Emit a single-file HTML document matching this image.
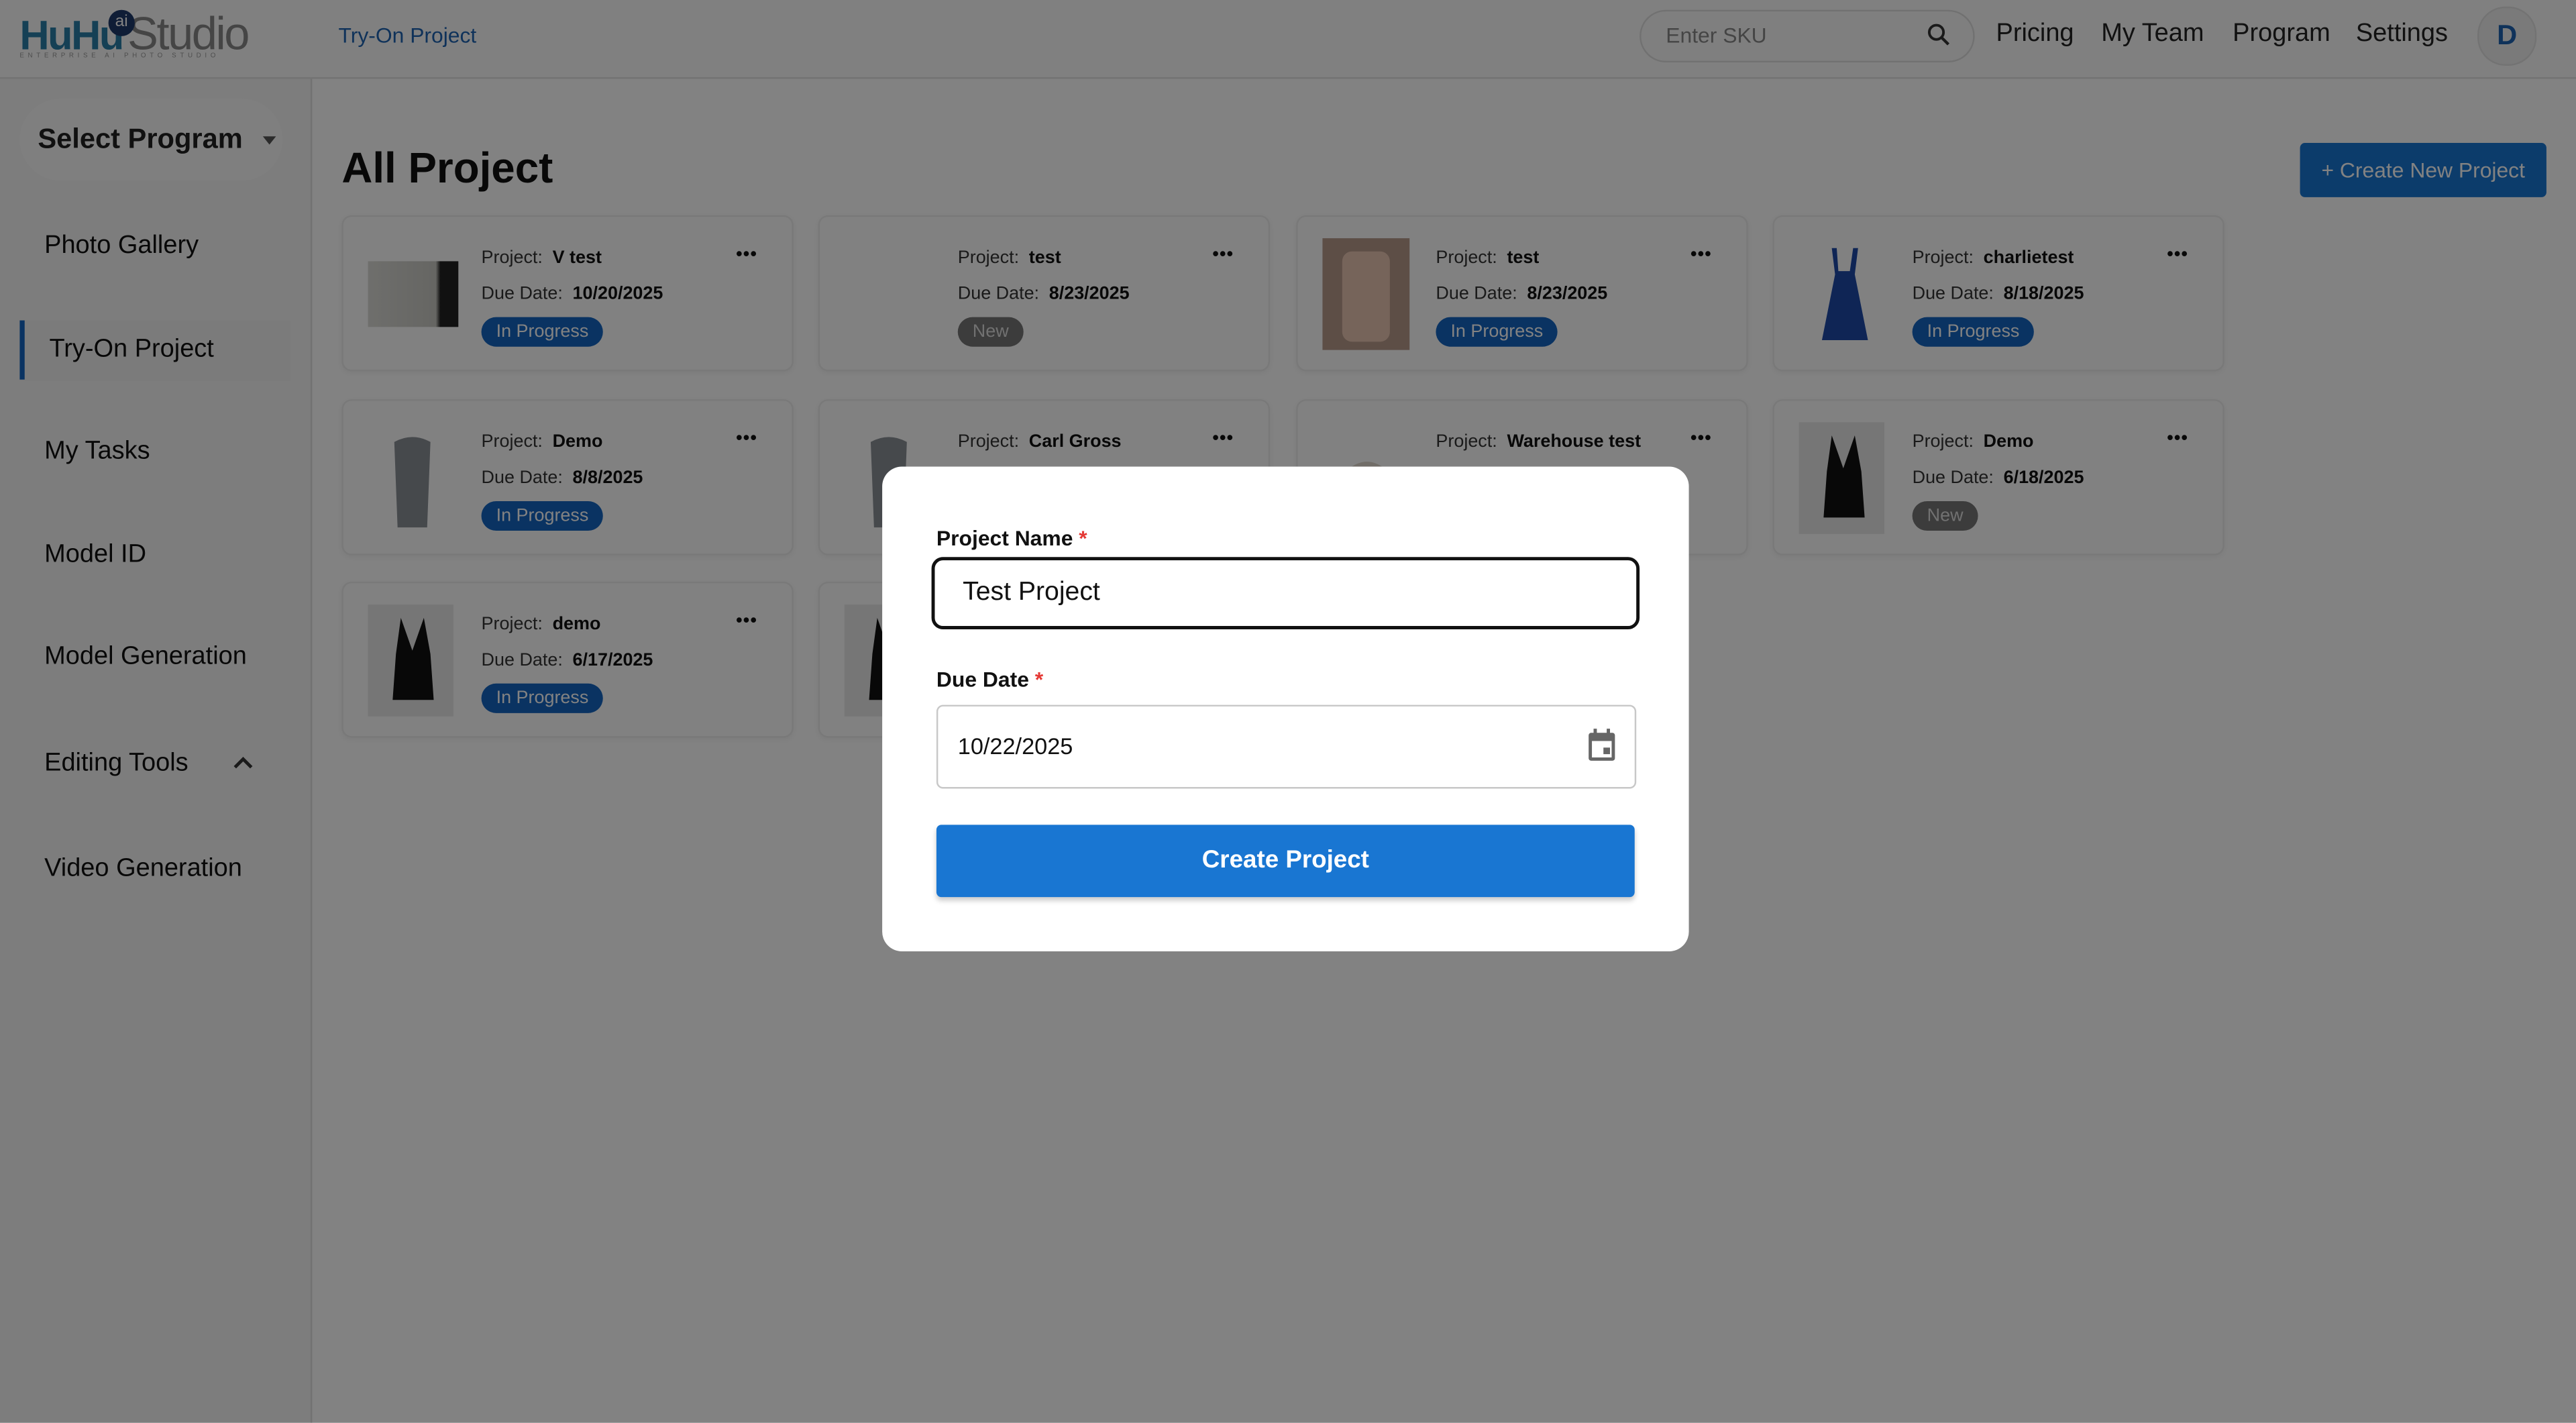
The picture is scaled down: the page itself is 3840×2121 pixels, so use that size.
<!DOCTYPE html>
<html><head><meta charset="utf-8">
<style>
html,body{margin:0;padding:0;width:3840px;height:2121px;overflow:hidden;background:#fff;}
#s{position:absolute;left:0;top:0;width:1568px;height:866px;transform:scale(2.44898);transform-origin:0 0;font-family:"Liberation Sans",sans-serif;color:#222;background:#fff;overflow:hidden;}
.abs{position:absolute;}
.hdr{left:0;top:0;width:1568px;height:47px;background:#fbfbfb;border-bottom:1px solid #e2e2e2;}
.side{left:0;top:48px;width:189px;height:818px;background:#f6f6f6;border-right:1px solid #e0e0e0;}
.mi{position:absolute;left:27px;font-size:15.5px;color:#111;}
.card{position:absolute;width:273px;height:93px;border:1px solid #eee;border-radius:6px;background:#fdfdfd;box-shadow:0 1px 3px rgba(0,0,0,.05);}
.card .th{position:absolute;left:15px;top:13px;width:55px;height:68px;}
.card .l1{position:absolute;left:84px;top:19px;font-size:11px;color:#333;}
.card .l2{position:absolute;left:84px;top:41px;font-size:11px;color:#333;}
.card b{font-weight:700;color:#111;margin-left:6px;}
.card .bd{position:absolute;left:84px;top:61px;height:18px;line-height:18px;border-radius:9px;font-size:11px;color:#fff;padding:0 9px;background:#1565c0;}
.card .bd.n{background:#777;color:#ddd;}
.card .dots{position:absolute;left:239px;top:17px;font-size:11px;font-weight:700;letter-spacing:0.5px;color:#111;}
.ov{left:0;top:0;width:1568px;height:866px;background:rgba(0,0,0,.49);}
.nv{position:absolute;top:12px;font-size:15.5px;color:#222;}
</style></head><body><div id="s">
<div class="abs hdr"></div>
<div class="abs" style="left:12px;top:5px;letter-spacing:-1px;"><span style="color:#2a7fa8;font-weight:700;font-size:25px;">HuHu</span><span style="color:#888;font-weight:300;font-size:28px;margin-left:3px;">Studio</span></div>
<div class="abs" style="left:66px;top:6px;width:16px;height:16px;border-radius:8px;background:#1f3a6a;color:#fff;font-size:10px;text-align:center;line-height:15px;">ai</div>
<div class="abs" style="left:12px;top:31px;font-size:4px;letter-spacing:2.3px;color:#999;">ENTERPRISE AI PHOTO STUDIO</div>
<div class="abs" style="left:206px;top:14px;font-size:13px;color:#1e63b0;">Try-On Project</div>
<div class="abs" style="left:998px;top:6px;width:202px;height:30px;border:1px solid #ddd;border-radius:16px;background:#fafafa;"></div>
<div class="abs" style="left:1014px;top:14px;font-size:13px;color:#888;">Enter SKU</div>
<svg class="abs" style="left:1172px;top:13px" width="16" height="16" viewBox="0 0 24 24"><circle cx="10" cy="10" r="6.5" fill="none" stroke="#333" stroke-width="2.4"/><path d="M15 15l6 6" stroke="#333" stroke-width="2.6"/></svg>
<div class="nv" style="left:1215px;">Pricing</div>
<div class="nv" style="left:1279px;">My Team</div>
<div class="nv" style="left:1359px;">Program</div>
<div class="nv" style="left:1434px;">Settings</div>
<div class="abs" style="left:1508px;top:4px;width:34px;height:34px;border-radius:17px;background:#f0f0f0;border:1px solid #e2e2e2;color:#1e63b0;font-size:17px;font-weight:700;text-align:center;line-height:34px;">D</div>

<div class="abs side"></div>
<div class="abs" style="left:12px;top:60px;width:160px;height:50px;border-radius:25px;background:#f9f9f9;"></div>
<div class="abs" style="left:23px;top:75px;font-size:17px;font-weight:700;color:#222;">Select Program</div>
<div class="abs" style="left:160px;top:83px;width:0;height:0;border-left:4px solid transparent;border-right:4px solid transparent;border-top:5px solid #555;"></div>
<div class="mi" style="top:141px;">Photo Gallery</div>
<div class="abs" style="left:12px;top:195px;width:165px;height:37px;background:#f2f2f2;"></div>
<div class="abs" style="left:12px;top:195px;width:3px;height:36px;background:#1565c0;"></div>
<div class="mi" style="left:30px;top:204px;">Try-On Project</div>
<div class="mi" style="top:266px;">My Tasks</div>
<div class="mi" style="top:329px;">Model ID</div>
<div class="mi" style="top:391px;">Model Generation</div>
<div class="mi" style="top:456px;">Editing Tools</div>
<svg class="abs" style="left:141px;top:459px" width="14" height="10" viewBox="0 0 14 10"><path d="M2 8l5-5 5 5" fill="none" stroke="#333" stroke-width="2"/></svg>
<div class="mi" style="top:520px;">Video Generation</div>

<div class="abs" style="left:208px;top:87px;font-size:26px;font-weight:700;color:#111;">All Project</div>
<div class="abs" style="left:1400px;top:87px;width:150px;height:33px;background:#1976d2;border-radius:3px;color:#fff;font-size:13px;line-height:33px;text-align:center;">+ Create New Project</div>

<div class="card" style="left:208px;top:131px;"><div class="th" style="top:27px;height:40px;background:linear-gradient(90deg,#d9d9d5 0,#c8c8c2 75%,#222 80%);"></div><div class="l1">Project:<b>V test</b></div><div class="l2">Due Date:<b>10/20/2025</b></div><div class="bd">In Progress</div><div class="dots">•••</div></div>
<div class="card" style="left:498px;top:131px;"><div class="l1">Project:<b>test</b></div><div class="l2">Due Date:<b>8/23/2025</b></div><div class="bd n">New</div><div class="dots">•••</div></div>
<div class="card" style="left:789px;top:131px;"><div class="th" style="width:53px;background:#b6998a;"><div style="margin:8px 12px;width:29px;height:55px;background:#e8c4b0;border-radius:6px;"></div></div><div class="l1">Project:<b>test</b></div><div class="l2">Due Date:<b>8/23/2025</b></div><div class="bd">In Progress</div><div class="dots">•••</div></div>
<div class="card" style="left:1079px;top:131px;"><svg class="th" viewBox="0 0 55 68"><path d="M20 6 L22 22 L14 62 L42 62 L34 22 L36 6 L33 6 L31 20 L24 20 L23 6Z" fill="#1f4aa8"/></svg><div class="l1">Project:<b>charlietest</b></div><div class="l2">Due Date:<b>8/18/2025</b></div><div class="bd">In Progress</div><div class="dots">•••</div></div>
<div class="card" style="left:208px;top:243px;"><svg class="th" viewBox="0 0 55 68"><path d="M16 12 Q27 6 38 12 L36 64 L18 64Z" fill="#8a8f96"/></svg><div class="l1">Project:<b>Demo</b></div><div class="l2">Due Date:<b>8/8/2025</b></div><div class="bd">In Progress</div><div class="dots">•••</div></div>
<div class="card" style="left:498px;top:243px;"><svg class="th" viewBox="0 0 55 68"><path d="M16 12 Q27 6 38 12 L36 64 L18 64Z" fill="#8a8f96"/></svg><div class="l1">Project:<b>Carl Gross</b></div><div class="l2">Due Date:<b>8/8/2025</b></div><div class="bd">In Progress</div><div class="dots">•••</div></div>
<div class="card" style="left:789px;top:243px;"><svg class="th" viewBox="0 0 55 68"><path d="M14 30 Q27 18 40 30 L42 64 L12 64Z" fill="#ddd6cc"/></svg><div class="l1">Project:<b>Warehouse test</b></div><div class="l2">Due Date:<b>7/1/2025</b></div><div class="bd">In Progress</div><div class="dots">•••</div></div>
<div class="card" style="left:1079px;top:243px;"><div class="th" style="width:52px;background:#e8e8e8;"></div><svg class="th" viewBox="0 0 55 68"><path d="M20 8 L27 28 L34 8 L38 30 L40 58 L15 58 L17 30Z" fill="#111"/></svg><div class="l1">Project:<b>Demo</b></div><div class="l2">Due Date:<b>6/18/2025</b></div><div class="bd n">New</div><div class="dots">•••</div></div>
<div class="card" style="left:208px;top:354px;"><div class="th" style="width:52px;background:#e8e8e8;"></div><svg class="th" viewBox="0 0 55 68"><path d="M20 8 L27 28 L34 8 L38 30 L40 58 L15 58 L17 30Z" fill="#111"/></svg><div class="l1">Project:<b>demo</b></div><div class="l2">Due Date:<b>6/17/2025</b></div><div class="bd">In Progress</div><div class="dots">•••</div></div>
<div class="card" style="left:498px;top:354px;"><div class="th" style="width:52px;background:#e8e8e8;"></div><svg class="th" viewBox="0 0 55 68"><path d="M20 8 L27 28 L34 8 L38 30 L40 58 L15 58 L17 30Z" fill="#111"/></svg><div class="l1">Project:<b>demo</b></div><div class="l2">Due Date:<b>6/17/2025</b></div><div class="bd">In Progress</div><div class="dots">•••</div></div>

<div class="abs ov"></div>

<div class="abs" style="left:537px;top:284px;width:491px;height:295px;background:#fff;border-radius:12px;"></div>
<div class="abs" style="left:570px;top:320px;font-size:13px;font-weight:700;color:#111;">Project Name <span style="color:#e53935;">*</span></div>
<div class="abs" style="left:567px;top:339px;width:427px;height:40px;border:2.5px solid #111;border-radius:7px;background:#fff;"></div>
<div class="abs" style="left:586px;top:352px;font-size:16px;color:#111;">Test Project</div>
<div class="abs" style="left:570px;top:406px;font-size:13px;font-weight:700;color:#111;">Due Date <span style="color:#e53935;">*</span></div>
<div class="abs" style="left:570px;top:429px;width:424px;height:49px;border:1px solid #c8c8c8;border-radius:4px;background:#fff;"></div>
<div class="abs" style="left:583px;top:446px;font-size:14px;color:#111;">10/22/2025</div>
<svg class="abs" style="left:965px;top:443px" width="20" height="22" viewBox="0 0 20 22"><rect x="2" y="3" width="16" height="17" rx="1.5" fill="#666"/><rect x="4" y="8" width="12" height="10" fill="#fff"/><rect x="5" y="0.5" width="2" height="4" fill="#666"/><rect x="13" y="0.5" width="2" height="4" fill="#666"/><rect x="11" y="12" width="4" height="4" fill="#666"/></svg>
<div class="abs" style="left:570px;top:502px;width:425px;height:44px;background:#1976d2;border-radius:3px;box-shadow:0 2px 3px rgba(0,0,0,.2);color:#fff;font-size:15px;font-weight:700;text-align:center;line-height:44px;">Create Project</div>
</div></body></html>
